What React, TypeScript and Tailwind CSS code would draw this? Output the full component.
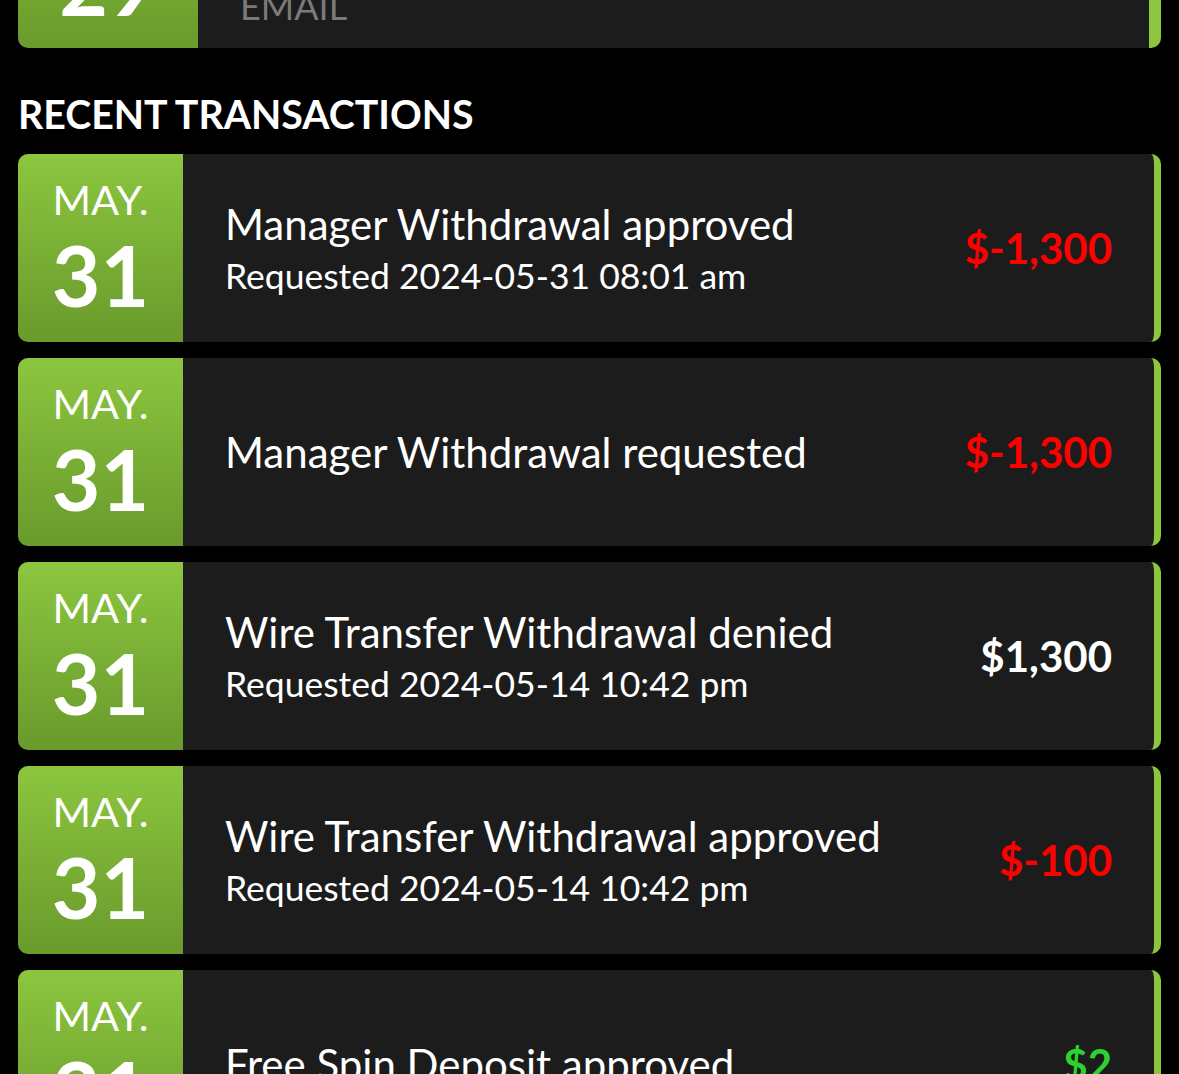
import React from "react";

type Tx = { title: string; sub?: string; amount: string; color: string; day: string };

const txs: Tx[] = [
  { title: "Manager Withdrawal approved", sub: "Requested 2024-05-31 08:01 am", amount: "$-1,300", color: "text-[#ff0000]", day: "31" },
  { title: "Manager Withdrawal requested", amount: "$-1,300", color: "text-[#ff0000]", day: "31" },
  { title: "Wire Transfer Withdrawal denied", sub: "Requested 2024-05-14 10:42 pm", amount: "$1,300", color: "text-white", day: "31" },
  { title: "Wire Transfer Withdrawal approved", sub: "Requested 2024-05-14 10:42 pm", amount: "$-100", color: "text-[#ff0000]", day: "31" },
  { title: "Free Spin Deposit approved", amount: "$2", color: "text-[#2fd12f]", day: "31" },
];

function Card({ tx }: { tx: Tx }) {
  return (
    <div className="flex h-[188px] shrink-0 overflow-hidden rounded-[10px] border-r-[7px] border-[#8cc63f] bg-[#1c1c1c]">
      <div className="flex w-[165px] shrink-0 flex-col items-center bg-gradient-to-b from-[#8cc63f] to-[#699a2c] pt-[21px]">
        <div className="text-[41.5px] leading-[48px] text-white">MAY.</div>
        <div className="mt-[10px] text-[84px] font-bold leading-[84px] text-white">{tx.day}</div>
      </div>
      <div className="flex flex-1 items-center pl-[42px] pr-[42px]">
        <div className="flex flex-1 flex-col">
          <div className="text-[42px] leading-[52px] text-white">{tx.title}</div>
          {tx.sub && <div className="mt-[4px] text-[35.5px] leading-[44px] text-white">{tx.sub}</div>}
        </div>
        <div className={`text-[42px] font-bold ${tx.color}`}>{tx.amount}</div>
      </div>
    </div>
  );
}

export default function App() {
  return (
    <div className="h-[1074px] w-[1179px] overflow-hidden bg-black px-[18px] pr-[18px]" style={{ fontFamily: "Lato, 'Noto Sans', sans-serif" }}>
      <div className="-mt-[140px] flex h-[188px] overflow-hidden rounded-[10px] border-r-[12px] border-[#8cc63f] bg-[#1c1c1c]">
        <div className="flex w-[180px] shrink-0 flex-col items-center justify-end bg-gradient-to-b from-[#8cc63f] to-[#6a9a2c] pb-[22px]">
          <div className="text-[84px] font-bold leading-[84px] text-white">29</div>
        </div>
        <div className="flex flex-1 flex-col justify-end pb-[22px] pl-[42px]">
          <div className="text-[36px] leading-[40px] text-[#7a7a7a]">EMAIL</div>
        </div>
      </div>
      <h2 className="pb-[16px] pt-[42px] text-[39.3px] font-bold leading-[48px] text-white">RECENT TRANSACTIONS</h2>
      <div className="flex flex-col gap-[16px]">
        {txs.map((t, i) => (
          <Card key={i} tx={t} />
        ))}
      </div>
    </div>
  );
}
